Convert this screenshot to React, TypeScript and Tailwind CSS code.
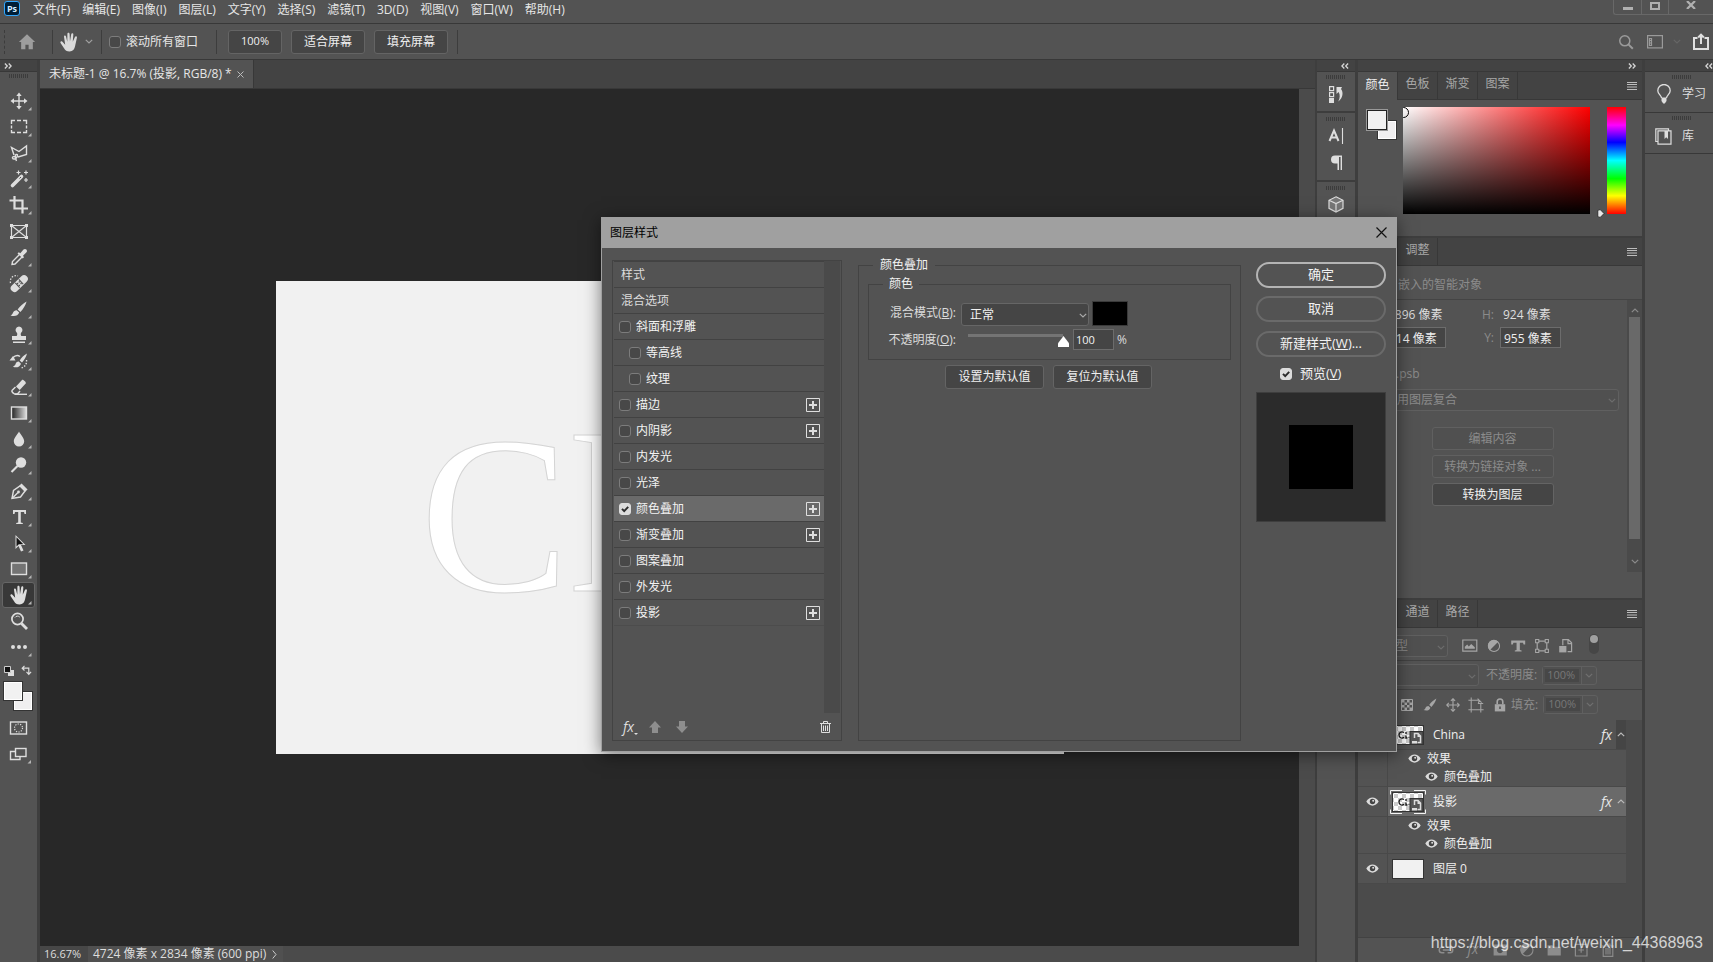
import React, { ReactNode } from "react";

/* ---------- shared pieces ---------- */

function Icon({ children, className = "size-5" }: { children: ReactNode; className?: string }) {
  return (
    <svg viewBox="0 0 20 20" className={className} fill="none" stroke="currentColor" strokeWidth="1.4" aria-hidden="true">
      {children}
    </svg>
  );
}

function Chevron({ className = "" }: { className?: string }) {
  return (
    <svg viewBox="0 0 8 5" className={`h-[5px] w-2 shrink-0 ${className}`} fill="none" stroke="currentColor" strokeWidth="1.2" aria-hidden="true">
      <path d="M.8 .8 4 4 7.2 .8" />
    </svg>
  );
}

function DoubleChevron({ left = false }: { left?: boolean }) {
  return (
    <svg viewBox="0 0 8 6" className="h-[6px] w-2" fill="none" stroke="#d6d6d6" strokeWidth="1.3" aria-hidden="true">
      {left ? <path d="M3.3.5.9 3l2.4 2.5M7.1.5 4.7 3l2.4 2.5" /> : <path d="M.9.5 3.3 3 .9 5.5M4.7.5 7.1 3 4.7 5.5" />}
    </svg>
  );
}

function Grip() {
  return (
    <svg viewBox="0 0 20 4" className="h-1 w-5" aria-hidden="true">
      <path d="M.5 0v4M2.5 0v4M4.5 0v4M6.5 0v4M8.5 0v4M10.5 0v4M12.5 0v4M14.5 0v4M16.5 0v4M18.5 0v4" stroke="#3c3c3c" />
    </svg>
  );
}

function Check({ label, checked = false, id }: { label?: string; checked?: boolean; id?: string }) {
  return (
    <span className="relative block size-3 shrink-0">
      <input
        id={id}
        type="checkbox"
        aria-label={label}
        defaultChecked={checked}
        className="peer block size-3 appearance-none rounded-[3px] border border-[#7c7c7c] bg-[#484848] checked:border-[#dcdcdc] checked:bg-[#dcdcdc]"
      />
      <svg viewBox="0 0 12 12" className="pointer-events-none absolute inset-0 hidden size-3 peer-checked:block" fill="none" stroke="#2b2b2b" strokeWidth="1.9" aria-hidden="true">
        <path d="M3 5.8 5.2 8.2 9.2 3.8" />
      </svg>
    </span>
  );
}

const darkButton = "rounded-[3px] border border-[#646464] bg-[#454545] text-[#f0f0f0]";

/* ---------- top bars ---------- */

const menus = ["文件(F)", "编辑(E)", "图像(I)", "图层(L)", "文字(Y)", "选择(S)", "滤镜(T)", "3D(D)", "视图(V)", "窗口(W)", "帮助(H)"];

function MenuBar() {
  return (
    <header className="flex h-6 shrink-0 items-start border-b border-[#383838] pl-1">
      <div className="mt-px flex h-[15px] w-4 items-center justify-center rounded-[3px] border border-[#31a8ff] bg-[#001e36] text-[9px] leading-none font-bold text-[#d5ecff]">Ps</div>
      <nav className="ml-[13px] flex gap-3 leading-5">
        {menus.map((m) => (
          <button key={m} className="whitespace-nowrap">{m}</button>
        ))}
      </nav>
      <div className="ml-auto flex h-[15px] rounded-bl-[3px] border-b border-l border-[#686868] text-[#a8a8a8]">
        <button aria-label="最小化" className="flex w-7 items-center justify-center border-r border-[#686868]">
          <span className="mt-[3px] h-[3px] w-[10px] bg-[#b0b0b0]" />
        </button>
        <button aria-label="最大化" className="flex w-[27px] items-center justify-center border-r border-[#686868]">
          <span className="-mt-[2px] h-2 w-[10px] border-2 border-[#b0b0b0]" />
        </button>
        <button aria-label="关闭" className="flex w-11 items-center justify-center">
          <svg viewBox="0 0 10 8" className="-mt-1 h-2 w-[10px]" stroke="#b0b0b0" strokeWidth="2.2" aria-hidden="true"><path d="M1 0l8 8M9 0 1 8" /></svg>
        </button>
      </div>
    </header>
  );
}

const handShape = (
  <path
    fill="currentColor"
    stroke="none"
    transform="translate(-1 -1.5) scale(1.16)"
    d="M6.2 12.2 5.2 5.6c-.2-1.4 1.4-1.7 1.7-.4L8 9.6 8.1 3c0-1.4 1.8-1.4 1.9 0l.3 6.4L11.400 3.200c.2-1.300 2-1 1.800.4l-.5 6.200L14.600 5.700c.5-1.200 2-.7 1.700.5l-1.600 7.300c-.5 2.500-2 4.500-4.700 4.500-2.500 0-3.700-1-4.800-2.800L2.200 10.700c-.6-1.100.6-1.900 1.600-1z"
  />
);

function OptionsBar() {
  return (
    <div className="flex h-9 shrink-0 items-center border-b border-[#383838]">
      <div className="ml-1 h-6 w-[2px] border-l border-dashed border-[#3c3c3c]" />
      <button aria-label="主页" className="ml-3 text-[#9d9d9d]">
        <Icon className="size-[18px]"><path fill="currentColor" stroke="none" d="M10 1.500 1 10h2.500v8h4.700v-5h3.600v5h4.700v-8H19z" /></Icon>
      </button>
      <div className="ml-4 h-6 w-px bg-[#3d3d3d]" />
      <button aria-label="抓手工具" className="ml-[6px] flex items-center gap-[6px] text-[#dadada]">
        <Icon className="size-5">{handShape}</Icon>
        <Chevron className="text-[#a0a0a0]" />
      </button>
      <div className="ml-2 h-6 w-px bg-[#3d3d3d]" />
      <label className="ml-[7px] flex items-center gap-[5px]"><Check />滚动所有窗口</label>
      <div className="ml-[18px] h-6 w-px bg-[#3d3d3d]" />
      <button className={`${darkButton} ml-[11px] h-6 w-[54px] text-[11px]`}>100%</button>
      <button className={`${darkButton} ml-[9px] h-6 w-[74px]`}>适合屏幕</button>
      <button className={`${darkButton} ml-[9px] h-6 w-[74px]`}>填充屏幕</button>
      <div className="ml-[9px] h-6 w-px bg-[#3d3d3d]" />
      <div className="ml-auto flex items-center pr-1 text-[#9a9a9a]">
        <button aria-label="搜索"><Icon className="size-4"><circle cx="8.500" cy="8.500" r="6.300" strokeWidth="1.900" /><path d="m13 13 5.500 5.500" strokeWidth="2.500" /></Icon></button>
        <button aria-label="工作区" className="ml-[13px]">
          <svg viewBox="0 0 16 14" className="h-[14px] w-4" fill="none" stroke="currentColor" strokeWidth="1.200" aria-hidden="true"><rect x=".6" y=".6" width="14.800" height="12.300" /><path d="M2.500 3.500h2v7h-2zM2.500 5.500h2M2.500 8h2" /></svg>
        </button>
        <Chevron className="ml-[10px] text-[#666]" />
        <button aria-label="共享" className="ml-3 text-[#e0e0e0]">
          <svg viewBox="0 0 16 17" className="h-[17px] w-4" fill="none" stroke="currentColor" strokeWidth="2" aria-hidden="true"><path d="M4.500 5H1v11h14V5h-3.500M8 11V2M5.200 4.500 8 1.600l2.800 2.900" /></svg>
        </button>
      </div>
    </div>
  );
}

/* ---------- tool column ---------- */

const tools: { name: string; art: ReactNode; corner?: boolean; on?: boolean }[] = [
  { name: "移动工具", art: <><path d="M10 3v14M3 10h14" /><path fill="currentColor" stroke="none" d="M10 1.500 12.700 5H7.300zM10 18.500 7.300 15h5.400zM1.500 10 5 7.300v5.400zM18.500 10 15 12.700V7.300z" /></> },
  { name: "矩形选框工具", art: <path d="M2.500 7V3.500H6M8 3.500h4M14 3.500h3.500V7M17.500 8.500v3M17.500 13v2.500H14M12 15.500H8M6 15.500H2.500V13M2.500 11.500v-3" /> },
  { name: "多边形套索工具", art: <path d="M7 14.500C5.500 13 3 13.500 3.500 15s3.500 1.500 4.500-1 .5-3-1-2.500-.5 3.500.5 6.500M5 12 2.500 4.500l7.500 4L17.500 3v8.500L9 14" /> },
  { name: "魔棒工具", art: <><path d="m3.500 16.500 9-9" strokeWidth="3.600" strokeLinecap="round" /><path d="m10.500 9.500 1.500-1.500" stroke="#535353" strokeWidth="1" /><path d="M9.500 1.500v4M7.500 3.500h4M17 1.500v4M15 3.500h4M17 9v4M15 11h4" strokeWidth="1.200" /></> },
  { name: "裁剪工具", art: <path d="M5.500 1v12.500H19M.5 5.500h13v13" strokeWidth="2.200" /> },
  { name: "图框工具", corner: false, art: <><path d="M2.500 4.500h15v12h-15zM2.500 4.500l15 12M17.500 4.500l-15 12" strokeWidth="1.200" /><path d="M1 3h3v3H1zM16 3h3v3h-3zM1 15h3v3H1zM16 15h3v3h-3z" fill="currentColor" stroke="none" /></> },
  { name: "吸管工具", art: <><path d="M10.500 7.500 3.500 14.500 3 17.500l3-.5 7-7" /><path fill="currentColor" stroke="none" d="m8.500 6.500 1.300-1.300 1.500 1L14.500 2.500c2-1.800 4.500.7 3 2.800L14 8.800l1 1.400-1.300 1.300z" /></> },
  { name: "污点修复画笔工具", art: <><path d="m5.500 15.200 9.500-9.200" strokeWidth="7.600" strokeLinecap="round" /><path d="M6.300 9.800l4.400 4.800M9.800 6.400l4.400 4.800" stroke="#535353" strokeWidth="1.100" /><path d="M8.500 10.500h.1M10.300 8.800h.1M12 10.500h.1M10.300 12.300h.1" stroke="#535353" strokeWidth="1.300" strokeLinecap="square" /><path d="M1.500 10C.5 5 4.500 1.500 9 3" strokeDasharray="1.500 1.500" strokeWidth="1.300" /></> },
  { name: "画笔工具", art: <path fill="currentColor" stroke="none" d="M17.600 2.500c-3 1.500-7 5-9 8l2.800 2.400c2.700-2.700 5.300-6.600 6.200-10.400zM7.700 11.300c-1.800.2-3.200 1-3.700 2.500-.4 1.200-1.100 2-2.500 2.700 3.300 1.200 7.700.8 8.700-2.900z" /> },
  { name: "仿制图章工具", art: <path fill="currentColor" stroke="none" d="M10 1.500a3.600 3.600 0 0 0-2 6.500c.5 1 .3 2-.3 3H3v4h14v-4h-4.700c-.6-1-.8-2-.3-3a3.600 3.600 0 0 0-2-6.500zM4 16.500h12V18H4z" /> },
  { name: "历史记录画笔工具", art: <><path fill="currentColor" stroke="none" d="M18 2.500c-2.500 1.200-5.500 4-7.300 7l2.300 2c2.300-2.600 4.200-5.600 5-9zM9.800 10.500c-2 0-2.800 1.200-3.200 2.600-.3 1.200-1.300 2-2.600 2.600 3 1.500 7 .5 8-3zM.5 9.500 4 5l2.500 4.500z" /><path d="M3.500 7C6 4.500 9 4 11 5.500" /><path d="M17.500 9c.5 4-1.500 7-5.500 8" strokeDasharray="1.400 1.500" /></> },
  { name: "橡皮擦工具", art: <><path fill="currentColor" stroke="none" d="m7 9.500 6-6.500c1-.9 4.600 2.500 3.700 3.500l-6 6.500z" /><path d="M6.500 10 3 13.500c-.5.800 1 2.500 2.500 3.500h3l2.500-3" /><path d="M6 17.300h12" /></> },
  { name: "渐变工具", art: <rect x="2.500" y="4" width="15" height="12" fill="url(#toolGradient)" /> },
  { name: "模糊工具", art: <path fill="currentColor" stroke="none" d="M10 2.500c1.500 3 5.200 6.500 5.200 9.800a5.200 5.200 0 0 1-10.400 0C4.800 9 8.500 5.500 10 2.500z" /> },
  { name: "减淡工具", art: <><circle cx="12" cy="7.500" r="5.200" fill="currentColor" stroke="none" /><path d="m8.500 11-6 6" strokeWidth="2.200" /></> },
  { name: "钢笔工具", art: <><path d="m3 17.500 1.500-8L11 5l5 5-4.500 6z" /><path d="m3 17.500 6-6" /><circle cx="9.500" cy="11" r="1.400" fill="currentColor" stroke="none" /><path d="m11.500 3.500 6 6" strokeWidth="3" /></> },
  { name: "横排文字工具", art: <path fill="currentColor" stroke="none" d="M4 3h13v4h-1.500l-.5-2h-3.200v10.500l2 .5v1H7.200v-1l2-.5V5H6l-.5 2H4z" /> },
  { name: "路径选择工具", art: <><path fill="currentColor" stroke="none" d="M6.500 2v14l3-3 2.500 5.500 2.500-1L12 12h4.500z" /><path fill="#151515" stroke="none" d="M7.500 4.300v9.300l2.300-2.300h4.500z" /></> },
  { name: "矩形工具", art: <rect x="2.500" y="4" width="15" height="11.500" fill="#747474" /> },
  { name: "抓手工具", on: true, art: handShape },
  { name: "缩放工具", corner: false, art: <><circle cx="8.500" cy="8" r="5.600" strokeWidth="1.700" /><path d="m12.500 12.500 5.500 5.500" strokeWidth="2.800" /><path d="M6 6.500c1-1.700 3.500-1.800 4.800-.4" strokeWidth="1" /></> },
  { name: "编辑工具栏", art: <path fill="currentColor" stroke="none" d="M4 8a2 2 0 1 1 0 4 2 2 0 0 1 0-4zM10 8a2 2 0 1 1 0 4 2 2 0 0 1 0-4zM16 8a2 2 0 1 1 0 4 2 2 0 0 1 0-4z" /> },
];

function ToolColumn() {
  return (
    <aside className="flex w-[37px] shrink-0 flex-col bg-[#535353]">
      <div className="flex h-3 items-center border-b border-[#383838] bg-[#434343] pl-1"><DoubleChevron /></div>
      <div className="flex h-4 items-start pt-[2px] pl-[9px]"><Grip /></div>
      <svg width="0" height="0" className="absolute" aria-hidden="true">
        <defs>
          <linearGradient id="toolGradient"><stop offset="0" stopColor="#222" /><stop offset="1" stopColor="#ddd" /></linearGradient>
        </defs>
      </svg>
      {tools.map((t) => (
        <button
          key={t.name}
          aria-label={t.name}
          className={t.on ? "ml-[2px] h-[26px] w-[33px] rounded-[3px] border border-[#666] bg-[#383838] text-[#dedede]" : "ml-[2px] h-[26px] w-[33px] border border-transparent text-[#dedede]"}
        >
          <svg viewBox="1 1 31 24" className="h-6 w-[31px]" fill="none" stroke="currentColor" strokeWidth="1.400" aria-hidden="true">
            <g transform="translate(7 3)">{t.art}</g>
            {t.corner !== false && <path d="M29.500 19v3.500H26z" fill="#b5b5b5" stroke="none" />}
          </svg>
        </button>
      ))}
      <div className="flex h-[21px] items-center gap-[7px] pl-1">
        <svg viewBox="0 0 10 10" className="size-[10px]" aria-hidden="true"><path d="M4 4h6v6H4z" fill="#ddd" /><path d="M.5.5h6v6h-6z" fill="#111" stroke="#ccc" /></svg>
        <svg viewBox="0 0 12 12" className="size-[11px]" fill="none" stroke="#ddd" strokeWidth="1.300" aria-hidden="true"><path d="M1.500 3.500h7v6M3.800 1 1.300 3.500 3.800 6M6 7.500l2.500 2.700L11 7.500" /></svg>
      </div>
      <div className="grid h-[31px] grid-cols-1 pl-[3px]">
        <button aria-label="背景色" className="col-start-1 row-start-1 mt-[10px] ml-[10px] size-5 border border-[#333] bg-[#f0eff0] outline outline-1 -outline-offset-2 outline-white" />
        <button aria-label="前景色" className="col-start-1 row-start-1 size-5 border border-[#333] bg-[#f1f1f1] outline outline-1 -outline-offset-2 outline-white" />
      </div>
      <button aria-label="快速蒙版" className="mt-[3px] ml-[9px] h-[26px] w-5 text-[#dedede]">
        <Icon><rect x="1.500" y="4" width="16" height="12" /><circle cx="9.500" cy="10" r="4" strokeDasharray="1.200 1.300" strokeWidth="1.200" /></Icon>
      </button>
      <button aria-label="屏幕模式" className="ml-[2px] h-[26px] w-[32px] text-[#dedede]">
        <svg viewBox="0 0 32 26" className="h-[26px] w-8" fill="none" stroke="currentColor" strokeWidth="1.400" aria-hidden="true"><rect x="13.500" y="7.500" width="10.500" height="8" fill="#535353" /><path d="M13 10.500H8.500v8H18V16" /><path d="M29 19v3.500h-3.500z" fill="#b5b5b5" stroke="none" /></svg>
      </button>
    </aside>
  );
}

/* ---------- document ---------- */

function DocumentArea() {
  return (
    <main className="flex min-w-0 flex-1 flex-col bg-[#535353]">
      <div className="flex h-[29px] shrink-0 border-b border-[#383838] bg-[#434343]">
        <div className="flex items-center gap-[5px] border-r border-[#383838] bg-[#535353] px-[9px] whitespace-nowrap">
          未标题-1 @ 16.7% (投影, RGB/8) *
          <button aria-label="关闭文档" className="text-[#bbb]">
            <svg viewBox="0 0 7 7" className="size-[7px]" fill="none" stroke="currentColor" aria-hidden="true"><path d="m.5.5 6 6M6.500.5l-6 6" /></svg>
          </button>
        </div>
      </div>
      <div className="flex min-h-0 flex-1">
        <div className="relative min-w-0 flex-1 overflow-hidden bg-[#282828]">
          <div className="absolute top-[192px] left-[236px] h-[473px] w-[788px] overflow-hidden bg-[#f1f1f1]">
            <p className="mt-[114px] ml-[144px] font-['Liberation_Serif',serif] text-[224px] leading-[240px] text-white [-webkit-text-stroke:1px_#d4d4d4]">Cl</p>
          </div>
        </div>
        <div className="w-4 bg-[#4b4b4b]" />
      </div>
      <footer className="flex h-4 shrink-0 items-center bg-[#4b4b4b] leading-4 whitespace-nowrap text-[#dedede]">
        <span className="w-12 bg-[#474747] pl-1 text-[11px]">16.67%</span>
        <span className="flex items-center gap-[6px] bg-[#505050] pr-[6px] pl-[5px]">
          4724 像素 x 2834 像素 (600 ppi)
          <svg viewBox="0 0 5 9" className="h-[9px] w-[5px]" fill="none" stroke="#ccc" aria-hidden="true"><path d="m.7.5 3.300 4-3.300 4" /></svg>
        </span>
      </footer>
    </main>
  );
}

/* ---------- right hand strips ---------- */

function IconStrip() {
  return (
    <aside className="flex w-[38px] shrink-0 flex-col bg-[#535353] text-[#dedede]">
      <div className="flex h-3 items-center justify-end border-b border-[#383838] bg-[#434343] pr-[6px]"><DoubleChevron left /></div>
      <div className="flex h-[41px] flex-col items-center border-b-2 border-[#3d3d3d] pt-[3px]">
        <Grip />
        <button aria-label="历史记录" className="mt-[6px]">
          <svg viewBox="0 0 16 18" className="h-[18px] w-4" fill="none" stroke="currentColor" strokeWidth="1.200" aria-hidden="true"><path d="M1.600 1.600h4v4h-4zM1.600 7.600h4v4h-4z" /><path d="M1 13h5v5H1zM8.500 2H14l-1 2c2.500 3 2.200 9-2.700 12.500 1.700-3.500 2-6.700.3-9.500L8.500 9z" fill="currentColor" stroke="none" /></svg>
        </button>
      </div>
      <div className="flex h-[69px] flex-col items-center border-b-2 border-[#3d3d3d] pt-1">
        <Grip />
        <button aria-label="字符" className="mt-[6px]">
          <svg viewBox="0 0 16 18" className="h-[18px] w-4" fill="none" stroke="currentColor" strokeWidth="2" aria-hidden="true"><path d="M1.500 14 6 3.500 10.500 14M3.300 10.500h5.400" /><path d="M14.500 1v16" strokeWidth="1.100" /></svg>
        </button>
        <button aria-label="段落" className="mt-[10px]">
          <svg viewBox="0 0 12 16" className="h-4 w-3" aria-hidden="true"><path fill="currentColor" d="M5 .5h7V15h-1.400V2H9v13H7.500V8.500H5a4 4 0 0 1 0-8z" /></svg>
        </button>
      </div>
      <div className="flex flex-col items-center pt-1">
        <Grip />
        <button aria-label="3D" className="mt-[6px]">
          <svg viewBox="0 0 16 17" className="h-[17px] w-4" fill="#777" stroke="currentColor" strokeWidth="1.200" aria-hidden="true"><path d="m8 .8 7 3.500v8L8 16l-7-3.700v-8z" /><path d="m1 4.300 7 3.200 7-3.200M8 7.500V16" /></svg>
        </button>
      </div>
    </aside>
  );
}

function LearnStrip() {
  return (
    <aside className="flex w-[68px] shrink-0 flex-col bg-[#535353] text-[#dedede]">
      <div className="flex h-3 items-center justify-end border-b border-[#383838] bg-[#434343]"><DoubleChevron left /></div>
      <div className="flex h-[41px] flex-col border-b border-[#383838] pt-[3px]">
        <span className="pl-[27px]"><Grip /></span>
        <button className="mt-[5px] flex items-center gap-[11px] pl-3">
          <svg viewBox="0 0 14 20" className="h-5 w-[14px]" fill="none" stroke="currentColor" strokeWidth="1.300" aria-hidden="true"><path d="M4.500 14c0-2.500-3.700-4-3.700-7.300a6.200 6.200 0 0 1 12.400 0c0 3.300-3.700 4.800-3.700 7.300" /><path d="M4.500 13.500h5V17L7.800 19.500H6.200L4.500 17z" fill="currentColor" stroke="none" /></svg>
          学习
        </button>
      </div>
      <div className="flex h-[41px] flex-col border-b border-[#383838] pt-[3px]">
        <span className="pl-[27px]"><Grip /></span>
        <button className="mt-[7px] flex items-center gap-[10px] pl-[10px]">
          <svg viewBox="0 0 17 17" className="size-[17px]" fill="none" stroke="currentColor" strokeWidth="1.200" aria-hidden="true"><path d="M2.800 13.500H.8V.8h12.700v1.800M3 2.800h13v13.400H3z" /><path d="M9.500 3H13v8l-1.800-1.700L9.500 11z" fill="currentColor" stroke="none" /></svg>
          库
        </button>
      </div>
    </aside>
  );
}

function PanelTabs({ names, active }: { names: string[]; active: number }) {
  return (
    <div className="flex h-7 shrink-0 bg-[#434343]">
      {names.map((n, i) => (
        <button
          key={n}
          className={i === active ? "w-[39px] bg-[#535353] pb-[3px] text-[#efefef]" : "w-10 border-b border-l border-[#383838] pb-[3px] text-[#a8a8a8]"}
        >
          {n}
        </button>
      ))}
      <div className="flex flex-1 items-center justify-end border-b border-l border-[#383838] pr-[5px]">
        <button aria-label="面板菜单">
          <svg viewBox="0 0 10 8" className="h-2 w-[10px]" stroke="#bdbdbd" aria-hidden="true"><path d="M0 .5h10M0 2.500h10M0 5h10M0 7.500h10" /></svg>
        </button>
      </div>
    </div>
  );
}

function ColorPanel() {
  return (
    <section className="flex h-[164px] shrink-0 flex-col bg-[#535353]">
      <PanelTabs names={["颜色", "色板", "渐变", "图案"]} active={0} />
      <div className="flex items-start pt-[7px]">
        <div className="mt-[2px] ml-2 grid size-[31px] grid-cols-1">
          <button aria-label="背景色" className="col-start-1 row-start-1 mt-[11px] ml-[11px] size-5 border border-[#333] bg-[#f0eff0] outline outline-1 -outline-offset-2 outline-white" />
          <button aria-label="前景色" className="col-start-1 row-start-1 mt-px ml-px size-5 border border-[#222] bg-[#f1f1f1] outline outline-1 outline-[#999]" />
        </div>
        <div className="relative ml-[6px] h-[107px] w-[187px] overflow-hidden bg-[linear-gradient(to_top,#000,transparent),linear-gradient(to_right,#fff,#f00)]">
          <span className="absolute top-0 -left-[5px] size-[11px] rounded-full border border-black" />
        </div>
        <svg viewBox="0 0 8 9" className="mt-[102px] ml-[7px] h-[9px] w-2" aria-hidden="true"><path d="M1.500.8h2L7 4.500 3.500 8.200h-2L.8 7V2z" fill="#e8e8e8" stroke="#222" strokeWidth=".8" /></svg>
        <div className="ml-[2px] h-[107px] w-[19px] bg-[linear-gradient(to_bottom,#f00,#f0f_17%,#00f_33%,#0ff_50%,#0f0_67%,#ff0_83%,#f00)]" />
      </div>
    </section>
  );
}

const fieldInput = "h-[21px] w-[61px] border border-[#6c6c6c] bg-[#454545] px-[3px] text-[#eee]";

function PropertiesPanel() {
  return (
    <section className="flex h-[360px] shrink-0 flex-col bg-[#535353]">
      <PanelTabs names={["属性", "调整"]} active={0} />
      <h2 className="flex h-[34px] shrink-0 items-center border-b border-[#444] pt-1 pl-10 text-[#8b8b8b]">嵌入的智能对象</h2>
      <div className="flex">
        <div className="flex min-w-0 flex-1 flex-col">
          <div className="mt-1 flex h-[22px] items-center whitespace-nowrap text-[#dedede]">
            <span className="w-6 text-right text-[#8b8b8b]">W:</span>
            <span className="ml-[3px] w-[61px] pl-[3px]">2896 像素</span>
            <span className="w-[51px] pr-[3px] text-right text-[#8b8b8b]">H:</span>
            <span className="ml-[3px] pl-[3px]">924 像素</span>
          </div>
          <div className="mt-px flex items-center text-[#8b8b8b]">
            <label htmlFor="px" className="w-6 text-right">X:</label>
            <input id="px" defaultValue="914 像素" className={`${fieldInput} ml-[3px]`} />
            <label htmlFor="py" className="w-[51px] pr-[3px] text-right">Y:</label>
            <input id="py" defaultValue="955 像素" className={`${fieldInput} ml-[3px]`} />
          </div>
          <p className="mt-4 pl-[6px] leading-5 text-[#8b8b8b]">China.psb</p>
          <div className="relative mt-[5px] mr-2 ml-2">
            <select aria-label="图层复合" disabled className="block h-[22px] w-full appearance-none rounded-[3px] border border-[#606060] bg-[#505050] px-[6px] text-[#8b8b8b] opacity-100">
              <option>未应用图层复合</option>
            </select>
            <Chevron className="pointer-events-none absolute top-[9px] right-[3px] text-[#6d6d6d]" />
          </div>
          <div className="mt-4 flex flex-col items-center gap-[5px]">
            <button disabled className="h-[23px] w-[122px] rounded-[3px] border border-[#606060] bg-[#505050] text-[#8b8b8b]">编辑内容</button>
            <button disabled className="h-[23px] w-[122px] rounded-[3px] border border-[#606060] bg-[#505050] text-[#8b8b8b]">转换为链接对象 ...</button>
            <button className={`${darkButton} h-[23px] w-[122px]`}>转换为图层</button>
          </div>
        </div>
        <div className="flex h-[272px] w-[15px] flex-col items-center justify-between bg-[#4a4a4a] py-2 text-[#8b8b8b]">
          <Chevron className="rotate-180" />
          <div className="mb-4 h-[222px] w-[11px] bg-[#696969]" />
          <Chevron />
        </div>
      </div>
    </section>
  );
}

/* ---------- layers ---------- */

function Eye() {
  return (
    <svg viewBox="0 0 13 9" className="h-[9px] w-[13px]" aria-hidden="true">
      <path d="M.3 4.500C3.300-1 9.700-1 12.700 4.500 9.700 10 3.300 10 .3 4.500z" fill="#dcdcdc" />
      <circle cx="6.500" cy="4.500" r="2.700" fill="#444" />
      <circle cx="7.200" cy="3.800" r="1" fill="#dcdcdc" />
    </svg>
  );
}

function SmartThumb({ framed = false }: { framed?: boolean }) {
  return (
    <svg viewBox="0 0 36 24" className="h-6 w-9 shrink-0" aria-hidden="true">
      <defs>
        <pattern id="checker" width="8" height="8" patternUnits="userSpaceOnUse">
          <path d="M0 0h8v8H0z" fill="#fff" /><path d="M0 0h4v4H0zM4 4h4v4H4z" fill="#ccc" />
        </pattern>
      </defs>
      <rect x="2.500" y="2.500" width="31" height="19" fill="url(#checker)" stroke="#333" />
      <path d="M14 9.500c-2.500-1.500-5 0-5 2.500s2.500 4 5 2.300M16 9v2M16 12.500v2.500h1.500M18.500 14.500h1" fill="none" stroke="#111" strokeWidth="1.300" />
      <rect x="20" y="8.500" width="13" height="13" fill="#555" stroke="#333" />
      <path d="M24.500 15v-4.500h3.500l2.500 2.500v6.500h-3" fill="none" stroke="#ddd" strokeWidth="1.500" /><path d="M27.500 10v4h3.500zM22 18h5v2.500h-5z" fill="#ddd" />
      {framed && <path d="M.5 4.500v-4H12M24 .5h11.500v4M35.500 19.500v4H24M12 23.500H.5v-4" fill="none" stroke="#f4f4f4" />}
    </svg>
  );
}

function Fx({ className = "" }: { className?: string }) {
  return <span className={`font-['Open_Sans',sans-serif] leading-none font-medium italic ${className}`}>fx</span>;
}

function Effects() {
  return (
    <div className="flex h-[37px] border-b border-[#494949]">
      <div className="w-[30px] border-r border-[#494949]" />
      <div className="flex flex-col text-[#efefef]">
        <div className="flex h-[17px] items-center gap-[6px] pl-5"><Eye />效果</div>
        <div className="flex h-[19px] items-center gap-[6px] pl-[37px]"><Eye />颜色叠加</div>
      </div>
    </div>
  );
}

function LayerRow({ name, visible = true, selected = false }: { name: string; visible?: boolean; selected?: boolean }) {
  return (
    <div className="flex h-[30px] border-b border-[#494949]">
      <div className="flex w-[30px] items-center justify-center border-r border-[#494949]">{visible && <Eye />}</div>
      <div className={selected ? "flex flex-1 items-center bg-[#6a6a6a] pl-[2px]" : "flex flex-1 items-center pl-[2px]"}>
        <SmartThumb framed={selected} />
        <span className="ml-[7px] flex-1 text-[#efefef]">{name}</span>
        <Fx className="pr-1 text-[14px] text-[#e6e6e6]" />
        <span className={selected ? "flex h-full w-[10px] items-center justify-center text-[#bbb]" : "flex h-full w-[10px] items-center justify-center bg-[#454545] text-[#bbb]"}>
          <Chevron className="rotate-180" />
        </span>
      </div>
    </div>
  );
}

function PercentField({ label }: { label: string }) {
  return (
    <div className="flex items-center">
      <label htmlFor={`pct-${label}`} className="pr-[5px] text-[#8b8b8b]">{label}:</label>
      <div className="flex h-[19px] w-[55px] rounded-[3px] border border-[#606060]">
        <input id={`pct-${label}`} disabled defaultValue="100%" className="w-[38px] border-2 border-[#505050] bg-[#474747] pl-[2px] text-[11px] text-[#787878]" />
        <button disabled aria-label={`${label}选项`} className="flex flex-1 items-center justify-center border-l border-[#606060] text-[#707070]"><Chevron /></button>
      </div>
    </div>
  );
}

function LayersPanel() {
  return (
    <section className="flex min-h-0 flex-1 flex-col bg-[#535353]">
      <PanelTabs names={["图层", "通道", "路径"]} active={0} />
      <div className="flex h-[33px] shrink-0 items-center border-b border-[#424242] pt-1 pl-2 text-[#a6a6a6]">
        <div className="relative w-[82px]">
          <select aria-label="滤镜类型" disabled className="block h-[22px] w-full appearance-none rounded-[3px] border border-[#606060] bg-[#505050] pl-[17px] text-[#8b8b8b] opacity-100"><option>类型</option></select>
          <Chevron className="pointer-events-none absolute top-[10px] right-[3px] text-[#6d6d6d]" />
        </div>
        <div className="ml-[14px] flex items-center gap-[8px]">
          <Icon className="size-4"><path d="M1 2.500h17.500v14H1z" strokeWidth="1.500" /><path d="M3.500 13.500V11l3-3 2 2.500 3-3 4.500 4v2z" fill="currentColor" stroke="none" /></Icon>
          <Icon className="size-4"><circle cx="10" cy="10" r="7" strokeWidth="1.300" /><path d="M15.300 4.700A7.500 7.500 0 1 0 4.700 15.300z" fill="currentColor" stroke="none" /></Icon>
          <Icon className="size-4"><path fill="currentColor" stroke="none" d="M1.500 3H19v5h-2l-.8-2.200h-3.900V15l2.200.6V17H6v-1.400l2.200-.6V5.800H4.300L3.500 8h-2z" /></Icon>
          <Icon className="size-4"><path d="M4 4h12v12H4z" strokeWidth="1.500" /><path d="M2 2h4v4H2zM14 2h4v4h-4zM2 14h4v4H2zM14 14h4v4h-4z" fill="#535353" strokeWidth="1.300" /></Icon>
          <Icon className="size-4"><path d="M6 9V2h7l4 4v11h-5M12.500 2v5H17" strokeWidth="1.500" /><path d="M1.500 10h9v8h-9z" fill="currentColor" stroke="none" /></Icon>
        </div>
        <span className="mb-1 ml-[15px] flex h-5 w-[10px] justify-center rounded-full bg-[#464646]"><span className="mt-px size-2 rounded-full bg-[#a0a0a0]" /></span>
      </div>
      <div className="flex h-[29px] shrink-0 items-center border-b border-[#424242] pl-2">
        <div className="relative mr-[7px] w-[113px]">
          <select aria-label="混合模式" disabled className="block h-[22px] w-full appearance-none rounded-[3px] border border-[#606060] bg-[#505050] pl-1 text-[#8b8b8b] opacity-100"><option>正常</option></select>
          <Chevron className="pointer-events-none absolute top-[10px] right-[3px] text-[#6d6d6d]" />
        </div>
        <PercentField label="不透明度" />
      </div>
      <div className="flex h-[30px] shrink-0 items-center pb-px pl-2 text-[#a6a6a6]">
        <span className="w-[35px] text-[#8b8b8b]">锁定:</span>
        <div className="flex items-center gap-[8px]">
          <svg viewBox="0 0 12 12" className="mr-[1px] size-3" fill="none" stroke="currentColor" aria-hidden="true"><path d="M.5.5h11v11H.5z" /><path d="M1 1h2.500v2.500H1zM6 1h2.500v2.500H6zM3.500 3.500H6V6H3.500zM8.500 3.500H11V6H8.500zM1 6h2.500v2.500H1zM6 6h2.500v2.500H6zM3.500 8.500H6V11H3.500zM8.500 8.500H11V11H8.500z" fill="currentColor" stroke="none" /></svg>
          <Icon className="size-4"><path fill="currentColor" stroke="none" d="M18 2c-3 1.500-7 5-9 8l2.800 2.400C14.500 9.700 17.100 5.800 18 2zM8 11.200c-1.800.2-3.200 1-3.700 2.500-.4 1.200-1.100 2-2.500 2.700 3.300 1.200 7.700.8 8.700-2.900z" /></Icon>
          <Icon className="size-[14px]"><path d="M10 2v16M2 10h16M7 4l3-3 3 3M7 16l3 3 3-3M4 7l-3 3 3 3M16 7l3 3-3 3" strokeWidth="1.600" /></Icon>
          <Icon className="size-4"><path d="M4 .5v19M.5 4H14M16 8v11.500M.5 16h19M14 4l-1 4h6M12 2l5 5" strokeWidth="1.300" /></Icon>
          <Icon className="size-4"><path d="M3.500 9h13v9h-13z" fill="currentColor" stroke="none" /><path d="M6.500 9V6a3.500 3.500 0 0 1 7 0v3" strokeWidth="2" /><path d="M10 12v3" stroke="#535353" strokeWidth="2" /></Icon>
        </div>
        <div className="ml-[3px]"><PercentField label="填充" /></div>
      </div>
      <div className="flex min-h-0 flex-1">
        <div className="flex min-w-0 flex-1 flex-col bg-[#4b4b4b]">
          <div className="bg-[#535353]">
            <LayerRow name="China" visible={false} />
            <Effects />
            <LayerRow name="投影" selected />
            <Effects />
            <div className="flex h-[30px] border-b border-[#494949]">
              <div className="flex w-[30px] items-center justify-center border-r border-[#494949]"><Eye /></div>
              <div className="flex items-center pl-1"><span className="h-5 w-8 border border-[#333] bg-[#f1f1f1]" /><span className="ml-[9px] text-[#efefef]">图层 0</span></div>
            </div>
          </div>
        </div>
        <div className="w-4 bg-[#4b4b4b]" />
      </div>
      <div className="flex h-[25px] shrink-0 items-center justify-end gap-[11px] border-t border-[#424242] pr-[26px] text-[#8c8c8c]">
        <Icon className="size-4"><path d="M8 6.500H5a3.500 3.500 0 0 0 0 7h3M12 6.500h3a3.500 3.500 0 0 1 0 7h-3M6 10h8" strokeWidth="1.800" /></Icon>
        <span className="w-4 text-center"><Fx className="text-[14px]" /></span>
        <Icon className="size-4"><path fillRule="evenodd" d="M2 3h16.500v14H2zM10 6a4 4 0 1 0 .1 0z" fill="currentColor" stroke="none" /></Icon>
        <Icon className="size-4"><circle cx="10" cy="10" r="7.500" /><path d="M15 4.500A7.500 7.500 0 1 0 4.500 15z" fill="currentColor" stroke="none" /></Icon>
        <Icon className="size-4"><path d="M2 4h6l1.500 2H18.500v11H2z" fill="currentColor" stroke="none" /></Icon>
        <Icon className="size-4"><path d="M3 3h14.500v14.500H3zM10.200 6.500v7M6.700 10h7" strokeWidth="1.500" /></Icon>
        <Icon className="size-4"><path d="M2.500 5h15M7.500 5V2.500h5V5M4 5v13h12V5M7.500 7.500v8M10 7.500v8M12.500 7.500v8" strokeWidth="1.400" /></Icon>
      </div>
    </section>
  );
}

/* ---------- layer style dialog ---------- */

const styles: { name: string; nested?: boolean; add?: boolean; on?: boolean }[] = [
  { name: "斜面和浮雕" },
  { name: "等高线", nested: true },
  { name: "纹理", nested: true },
  { name: "描边", add: true },
  { name: "内阴影", add: true },
  { name: "内发光" },
  { name: "光泽" },
  { name: "颜色叠加", add: true, on: true },
  { name: "渐变叠加", add: true },
  { name: "图案叠加" },
  { name: "外发光" },
  { name: "投影", add: true },
];

function StyleList() {
  return (
    <div className="mt-1 flex w-[230px] shrink-0 flex-col border border-[#434343]">
      <div className="flex flex-1">
        <ul className="ml-px flex-1">
          <li className="flex h-[26px] items-center border-t border-[#424242] pl-[7px] text-[#dcdcdc]">样式</li>
          <li className="flex h-[26px] items-center border-t border-[#424242] pl-[7px] text-[#dcdcdc]">混合选项</li>
          {styles.map((s) => (
            <li key={s.name} className={s.on ? "flex h-[26px] items-center border-t border-[#424242] bg-[#6a6a6a] pr-1" : "flex h-[26px] items-center border-t border-[#424242] pr-1"}>
              <label className={s.nested ? "flex flex-1 items-center gap-[5px] pl-[15px]" : "flex flex-1 items-center gap-[5px] pl-[5px]"}>
                <Check checked={s.on} />
                {s.name}
              </label>
              {s.add && (
                <button aria-label={`添加${s.name}`}>
                  <svg viewBox="0 0 14 14" className="size-[14px]" fill="none" stroke="#dedede" aria-hidden="true"><path d="M.5.5h13v13H.5z" /><path d="M7 3v8M3 7h8" strokeWidth="2" /></svg>
                </button>
              )}
            </li>
          ))}
          <li className="border-t border-[#4c4c4c]" />
        </ul>
        <div className="mr-px w-4 bg-[#4a4a4a]" />
      </div>
      <div className="flex h-[27px] items-center pr-[10px] pl-[10px]">
        <button aria-label="效果菜单" className="flex items-end text-[#dedede]">
          <Fx className="text-[14px]" />
          <svg viewBox="0 0 4 2" className="-mb-px h-[2px] w-1" aria-hidden="true"><path d="M0 0h4L2 2z" fill="currentColor" /></svg>
        </button>
        <button aria-label="上移" className="ml-[11px]"><svg viewBox="0 0 12 12" className="size-3" aria-hidden="true"><path d="M6 0 12 6.500H9V12H3V6.500H0z" fill="#8e8e8e" /></svg></button>
        <button aria-label="下移" className="ml-[15px]"><svg viewBox="0 0 12 12" className="size-3" aria-hidden="true"><path d="M6 12 0 5.500h3V0h6v5.500h3z" fill="#8e8e8e" /></svg></button>
        <button aria-label="删除" className="ml-auto">
          <svg viewBox="0 0 11 12" className="h-3 w-[11px]" fill="none" stroke="#dedede" aria-hidden="true"><path d="M0 2.500h11M3.500 2V.5h4V2M1.500 3v8.500h8V3M3.500 4.500V10M5.500 4.500V10M7.500 4.500V10" /></svg>
        </button>
      </div>
    </div>
  );
}

function LayerStyleDialog() {
  return (
    <div role="dialog" aria-label="图层样式" className="absolute top-[217px] left-[601px] flex h-[535px] w-[796px] flex-col border border-t-0 border-[#a0a0a0] bg-[#535353] text-[#f2f2f2] shadow-[0_3px_16px_rgba(0,0,0,0.5)]">
      <div className="flex h-[31px] shrink-0 items-center justify-between bg-[#a0a0a0] pr-[9px] pl-2 text-black">
        <h1>图层样式</h1>
        <button aria-label="关闭对话框"><svg viewBox="0 0 11 11" className="size-[11px]" stroke="#111" strokeWidth="1.200" aria-hidden="true"><path d="m.5.5 10 10M10.500.5l-10 10" /></svg></button>
      </div>
      <div className="flex min-h-0 flex-1 px-[10px] pt-2 pb-[10px]">
        <StyleList />
        <fieldset className="ml-4 min-w-0 flex-1 border border-[#434343] px-[9px]">
          <legend className="ml-[5px] px-[7px] leading-[18px]">颜色叠加</legend>
          <fieldset className="mt-px border border-[#434343] pt-[7px] pb-[9px]">
            <legend className="ml-[14px] px-[6px] leading-[18px]">颜色</legend>
            <div className="flex h-[26px] items-center">
              <label htmlFor="blend" className="w-[87px] text-right text-[#dcdcdc]">混合模式(<u>B</u>):</label>
              <div className="relative mt-[3px] ml-[5px] w-32">
                <select id="blend" className="block h-[23px] w-full appearance-none rounded-[3px] border border-[#666] bg-[#454545] px-2 text-[#f2f2f2]"><option>正常</option></select>
                <Chevron className="pointer-events-none absolute top-[10px] right-[2px] text-[#aaa]" />
              </div>
              <button aria-label="叠加颜色" className="ml-[3px] h-[25px] w-9 border border-[#3a3a3a] bg-black" />
            </div>
            <div className="mt-[3px] flex h-[21px] items-center">
              <label htmlFor="opacity" className="w-[87px] text-right text-[#dcdcdc]">不透明度(<u>O</u>):</label>
              <input
                type="range"
                aria-label="不透明度"
                defaultValue={100}
                className="ml-3 h-3 w-[101px] appearance-none bg-transparent [&::-webkit-slider-runnable-track]:h-[3px] [&::-webkit-slider-runnable-track]:-translate-y-1 [&::-webkit-slider-runnable-track]:bg-[linear-gradient(to_right,#747474_95px,transparent_95px)] [&::-webkit-slider-thumb]:mt-[2px] [&::-webkit-slider-thumb]:h-[11px] [&::-webkit-slider-thumb]:w-[11px] [&::-webkit-slider-thumb]:appearance-none [&::-webkit-slider-thumb]:bg-white [&::-webkit-slider-thumb]:[clip-path:polygon(50%_0,100%_65%,100%_100%,0_100%,0_65%)]"
              />
              <input id="opacity" defaultValue="100" className="ml-1 h-[21px] w-[41px] border border-[#6c6c6c] bg-[#454545] px-[2px] text-[11px]" />
              <span className="ml-[3px] text-[12px] text-[#dcdcdc]">%</span>
            </div>
          </fieldset>
          <div className="mt-[5px] ml-[77px] flex gap-[9px]">
            <button className={`${darkButton} h-6 w-[99px]`}>设置为默认值</button>
            <button className={`${darkButton} h-6 w-[99px]`}>复位为默认值</button>
          </div>
        </fieldset>
        <div className="mt-[6px] ml-[15px] flex w-[130px] shrink-0 flex-col text-[13px]">
          <button className="h-[26px] rounded-full border-2 border-[#b4b4b4]">确定</button>
          <button className="mt-2 h-[26px] rounded-full border-2 border-[#6a6a6a]">取消</button>
          <button className="mt-[9px] h-[26px] rounded-full border-2 border-[#6a6a6a]">新建样式(<u>W</u>)...</button>
          <label className="mt-[7px] flex h-5 items-center gap-2 pl-6"><Check checked />
            <span>预览(<u>V</u>)</span>
          </label>
          <div className="mt-2 flex h-[130px] items-center justify-center border border-[#3e3e3e] bg-[#2b2b2b]"><div className="size-16 bg-black" /></div>
        </div>
      </div>
    </div>
  );
}

export default function App() {
  return (
    <div className="relative flex h-screen min-h-[900px] flex-col overflow-hidden bg-[#535353] font-['Open_Sans','Noto_Sans_CJK_SC',sans-serif] text-[12px] text-[#e6e6e6]">
      <MenuBar />
      <OptionsBar />
      <div className="flex min-h-0 flex-1 bg-[#3e3e3e]">
        <ToolColumn />
        <div className="w-[3px]" />
        <DocumentArea />
        <div className="w-[2px]" />
        <IconStrip />
        <div className="w-[3px]" />
        <aside className="flex w-[284px] shrink-0 flex-col">
          <div className="flex h-3 shrink-0 items-center justify-end border-b border-[#383838] bg-[#434343] pr-[6px]"><DoubleChevron /></div>
          <div className="flex min-h-0 flex-1 flex-col gap-[2px]">
            <ColorPanel />
            <PropertiesPanel />
            <LayersPanel />
          </div>
        </aside>
        <div className="w-[3px]" />
        <LearnStrip />
      </div>
      <LayerStyleDialog />
      <p className="pointer-events-none absolute right-[10px] bottom-[7px] font-['Liberation_Sans',sans-serif] text-[16px] leading-6 text-white/75">https://blog.csdn.net/weixin_44368963</p>
    </div>
  );
}
